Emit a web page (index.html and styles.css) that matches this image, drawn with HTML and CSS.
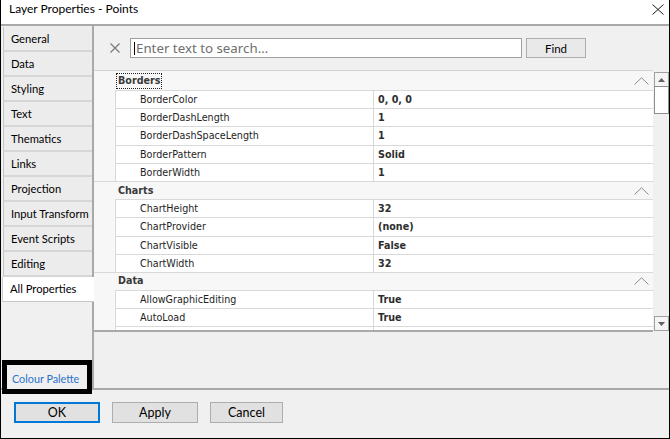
FILE: index.html
```html
<!DOCTYPE html>
<html>
<head>
<meta charset="utf-8">
<title>Layer Properties - Points</title>
<link rel="stylesheet" href="styles.css">
</head>
<body>
<div class="window">
  <div class="titlebar">
    <span class="title">Layer Properties - Points</span>
    <svg class="close" width="12" height="11" viewBox="0 0 12 11"><path d="M0.5 0.5 L11.5 10.5 M11.5 0.5 L0.5 10.5" stroke="#1a1a1a" stroke-width="1" fill="none"/></svg>
  </div>
  <div class="main">
    <div class="sidebar">
      <ul class="tabs">
        <li class="tab">General</li>
        <li class="tab">Data</li>
        <li class="tab">Styling</li>
        <li class="tab">Text</li>
        <li class="tab">Thematics</li>
        <li class="tab">Links</li>
        <li class="tab">Projection</li>
        <li class="tab">Input Transform</li>
        <li class="tab">Event Scripts</li>
        <li class="tab">Editing</li>
        <li class="tab active">All Properties</li>
      </ul>
      <div class="palette"><span class="palette-link">Colour Palette</span></div>
    </div>
    <div class="panel">
      <div class="search">
        <svg class="clear" width="10" height="10" viewBox="0 0 10 10"><path d="M0.5 0.5 L9.5 9.5 M9.5 0.5 L0.5 9.5" stroke="#7a7a7a" stroke-width="1.2" fill="none"/></svg>
        <div class="search-input"><span class="caret"></span><span class="placeholder">Enter text to search…</span></div>
        <div class="btn find">Find</div>
      </div>
      <div class="grid-wrap">
        <div class="grid">
          <div class="cat first"><span class="cat-label focus">Borders</span><svg class="chev" width="15" height="8" viewBox="0 0 15 8"><path d="M0.5 7.5 L7.5 0.8 L14.5 7.5" stroke="#8c8c8c" stroke-width="1" fill="none"/></svg></div>
          <div class="prop"><div class="name">BorderColor</div><div class="val">0, 0, 0</div></div>
          <div class="prop"><div class="name">BorderDashLength</div><div class="val">1</div></div>
          <div class="prop"><div class="name">BorderDashSpaceLength</div><div class="val">1</div></div>
          <div class="prop"><div class="name">BorderPattern</div><div class="val">Solid</div></div>
          <div class="prop"><div class="name">BorderWidth</div><div class="val">1</div></div>
          <div class="cat"><span class="cat-label">Charts</span><svg class="chev" width="15" height="8" viewBox="0 0 15 8"><path d="M0.5 7.5 L7.5 0.8 L14.5 7.5" stroke="#8c8c8c" stroke-width="1" fill="none"/></svg></div>
          <div class="prop"><div class="name">ChartHeight</div><div class="val">32</div></div>
          <div class="prop"><div class="name">ChartProvider</div><div class="val">(none)</div></div>
          <div class="prop"><div class="name">ChartVisible</div><div class="val">False</div></div>
          <div class="prop"><div class="name">ChartWidth</div><div class="val">32</div></div>
          <div class="cat"><span class="cat-label">Data</span><svg class="chev" width="15" height="8" viewBox="0 0 15 8"><path d="M0.5 7.5 L7.5 0.8 L14.5 7.5" stroke="#8c8c8c" stroke-width="1" fill="none"/></svg></div>
          <div class="prop"><div class="name">AllowGraphicEditing</div><div class="val">True</div></div>
          <div class="prop"><div class="name">AutoLoad</div><div class="val">True</div></div>
          <div class="prop"><div class="name"></div><div class="val"></div></div>
        </div>
        <div class="scrollbar">
          <div class="sb-btn"><svg width="7" height="4" viewBox="0 0 7 4"><path d="M0 4 L3.5 0 L7 4 Z" fill="#606060"/></svg></div>
          <div class="sb-thumb"></div>
          <div class="sb-track"></div>
          <div class="sb-btn"><svg width="7" height="4" viewBox="0 0 7 4"><path d="M0 0 L3.5 4 L7 0 Z" fill="#606060"/></svg></div>
        </div>
      </div>
      <div class="desc"></div>
    </div>
  </div>
  <div class="footer">
    <div class="btn dlg default">OK</div>
    <div class="btn dlg">Apply</div>
    <div class="btn dlg narrow">Cancel</div>
  </div>
</div>
</body>
</html>
```

FILE: styles.css
```css
* { box-sizing: border-box; }
html, body { margin: 0; padding: 0; background: #ffffff; }
body { width: 670px; height: 439px; overflow: hidden; font-family: Lato, "Noto Sans", sans-serif; font-size: 11.2px; color: #000; }

.window {
  width: 670px; height: 439px;
  border-left: 1px solid #000; border-right: 1px solid #000; border-bottom: 1px solid #000;
  background: #f0f0f0;
  display: flex; flex-direction: column;
}

.titlebar {
  height: 26px; flex: none;
  background: #fff;
  border-bottom: 2px solid #a9a9a9;
  display: flex; align-items: flex-start; justify-content: space-between;
  padding: 0 5px 0 8px;
}
.title { font-size: 12px; line-height: 18px; color: #000; }
.close { margin-top: 4px; }

.main {
  height: 364px; flex: none;
  display: flex;
  border-bottom: 2px solid #a9a9a9;
}

.sidebar {
  width: 93px; flex: none;
  border-right: 2px solid #a9a9a9;
  display: flex; flex-direction: column;
}
.tabs { list-style: none; margin: 1px 0 0 0; padding: 0 0 0 2px; }
.tab {
  height: 25px;
  background: #ececec;
  border-left: 1px solid #c4c4c4;
  border-bottom: 2px solid #d6d6d6;
  padding-left: 7px;
  line-height: 23px;
  white-space: nowrap;
}
.tab.active {
  background: #fff;
  margin-left: -1px;
  margin-right: -2px;
  padding-left: 7px;
  border-left: 1px solid #d0d0d0;
  border-bottom: 1px solid #c8c8c8;
}

.palette {
  position: relative;
  margin: auto 0 -6px 1px;
  width: 90px; height: 34px;
  border: 5px solid #000;
  background: #f0f0f0;
  padding: 7px 0 0 5px;
}
.palette-link { color: #2a72c9; font-size: 10.8px; white-space: nowrap; }

.panel { flex: 1; display: flex; flex-direction: column; min-width: 0; }

.search {
  height: 44px; flex: none;
  display: flex; align-items: flex-start;
  padding: 12px 0 0 16px;
}
.clear { margin: 5px 10px 0 0; }
.search-input {
  width: 392px; height: 20px;
  background: #fff; border: 1px solid #a0a0a0;
  display: flex; align-items: center;
  padding-left: 3px;
}
.caret { width: 1px; height: 13px; background: #000; margin-right: 1px; }
.placeholder { color: #6e6e6e; white-space: nowrap; font-family: "Noto Sans", sans-serif; font-size: 13.3px; }

.btn {
  background: #e1e1e1; border: 1px solid #adadad;
  display: flex; align-items: center; justify-content: center;
  font-size: 12px; color: #000;
}
.find { width: 60px; height: 20px; margin-left: 4px; background: #e9e9e9; font-size: 11.5px; }

.grid-wrap { height: 262px; flex: none; display: flex; }
.grid {
  flex: 1;
  border-top: 1px solid #d4d4d4;
  border-bottom: 2px solid #a9a9a9;
  background: #f7f7f7;
  overflow: hidden;
  font-family: "DejaVu Sans", sans-serif;
  font-size: 9.6px;
  color: #1e1e1e;
}
.cat {
  height: 18.2px;
  border-top: 1px solid #d9d9d9;
  display: flex; align-items: center; justify-content: space-between;
  padding: 0 4px 0 23px;
}
.cat.first { height: 19px; border-top: none; }
.cat-label { font-weight: bold; color: #3a3a3a; padding: 1px 1px 2px 1px; }
.cat-label.focus { outline: 1px dotted #222; outline-offset: 0; }
.prop {
  height: 18.2px;
  margin-left: 21px;
  display: flex;
  background: #fff;
  border-top: 1px solid #d9d9d9;
  border-left: 1px solid #d9d9d9;
}
.name { width: 257px; flex: none; padding-left: 24px; display: flex; align-items: center; white-space: nowrap; }
.val { flex: 1; border-left: 1px solid #d9d9d9; padding-left: 4px; display: flex; align-items: center; font-weight: bold; color: #2e2e2e; }

.scrollbar {
  width: 16px; flex: none;
  padding: 2px 0 0 1px;
  display: flex; flex-direction: column;
  background: #f0f0f0;
  height: 261px;
}
.sb-btn {
  height: 15px; flex: none;
  border: 1px solid #a0a0a0; background: #f4f4f4;
  display: flex; align-items: center; justify-content: center;
}
.sb-thumb { height: 28px; flex: none; border: 1px solid #8e8e8e; background: #fff; margin-top: -1px; }
.sb-track { flex: 1; }

.desc { flex: 1; }

.footer {
  flex: 1;
  display: flex; align-items: flex-start; gap: 12px;
  padding: 12px 0 0 13px;
}
.dlg { width: 86px; height: 21px; font-size: 12.5px; }
.dlg.default { border: 2px solid #0078d7; }
.dlg.narrow { width: 73px; }
```
